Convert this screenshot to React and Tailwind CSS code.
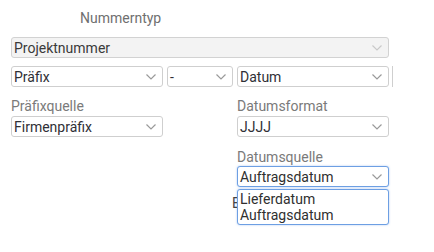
import React from "react";

function Chevron({ light }) {
  return (
    <svg width="10" height="6" viewBox="0 0 10 6" className="shrink-0">
      <path d="M0.5 0.5 L5 5 L9.5 0.5" fill="none" stroke={light ? "#c9c9c9" : "#9a9a9a"} strokeWidth="1.2" />
    </svg>
  );
}

function Select({ value, w, disabled, focused }) {
  return (
    <div
      className={
        "h-[21px] flex items-center justify-between pl-[2px] pr-[6px] rounded-[3px] border " +
        (disabled
          ? "bg-[#f3f3f3] border-[#d2d2d2] text-[#3a3a3a]"
          : focused
          ? "bg-white border-[#6d9fe3] text-[#2f2f2f] shadow-[0_0_2px_rgba(80,140,230,0.5)]"
          : "bg-white border-[#cfcfcf] text-[#2f2f36]")
      }
      style={{ width: w }}
    >
      <span className="leading-[16px] whitespace-nowrap">{value}</span>
      <Chevron light={disabled} />
    </div>
  );
}

export default function App() {
  return (
    <div
      className="w-[434px] h-[252px] bg-white pt-[10px] pl-[11px] text-[14px] overflow-hidden"
      style={{ fontFamily: "Roboto, 'Noto Sans', sans-serif" }}
    >
      <div className="pl-[69px] leading-[16px] text-[#6f6f6f]">Nummerntyp</div>
      <div className="mt-[11px]">
        <Select value="Projektnummer" w={378} disabled />
      </div>
      <div className="mt-[8px] flex items-center gap-[4px]">
        <Select value="Präfix" w={152} />
        <Select value="-" w={66} />
        <Select value="Datum" w={152} />
        <div className="w-[1px] h-[21px] bg-[#cfcfcf] ml-[-1px]" />
      </div>
      <div className="mt-[11px] flex gap-[74px]">
        <div className="flex flex-col gap-[2px]">
          <div className="leading-[16px] text-[#7a7a7a]">Präfixquelle</div>
          <Select value="Firmenpräfix" w={152} />
        </div>
        <div className="flex flex-col">
          <div className="flex flex-col gap-[2px]">
            <div className="leading-[16px] text-[#7a7a7a]">Datumsformat</div>
            <Select value="JJJJ" w={152} />
          </div>
          <div className="mt-[12px] flex flex-col gap-[1px]">
            <div className="leading-[16px] text-[#7a7a7a]">Datumsquelle</div>
            <div className="relative">
              <Select value="Auftragsdatum" w={152} focused />
              <div className="mt-[8px] ml-[-5px] w-[6px] overflow-hidden leading-[16px] text-[#444]">B</div>
              <div className="absolute left-0 top-[23px] w-[152px] h-[36px] bg-white border border-[#6d9fe3] rounded-[3px] pl-[2px] pt-[1px] text-[#2f2f2f] shadow-[0_0_2px_rgba(80,140,230,0.5)]">
                <div className="leading-[16px]">Lieferdatum</div>
                <div className="leading-[16px]">Auftragsdatum</div>
              </div>
            </div>
          </div>
        </div>
      </div>
    </div>
  );
}
